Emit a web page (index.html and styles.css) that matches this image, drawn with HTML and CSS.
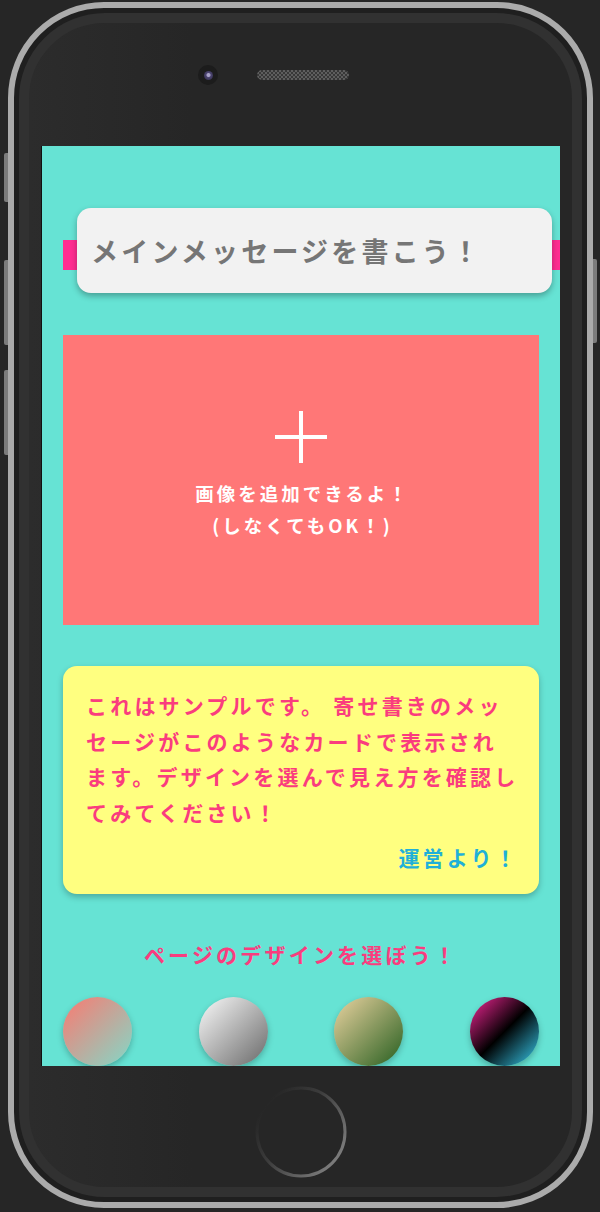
FILE: index.html
```html
<!DOCTYPE html>
<html lang="ja">
<head>
<meta charset="utf-8">
<title>寄せ書き</title>
<link rel="stylesheet" href="styles.css">
</head>
<body>
<div class="device">
  <div class="keys keys-left">
    <span class="key key-mute"></span>
    <span class="key key-vol"></span>
    <span class="key key-vol"></span>
  </div>
  <div class="phone">
    <div class="face">
      <div class="sensors">
        <span class="camera"><span class="lens"></span></span>
        <span class="speaker"></span>
      </div>
      <div class="screen">
        <div class="title-row">
          <div class="title-card">メインメッセージを書こう！</div>
        </div>
        <div class="image-drop">
          <svg class="plus" width="52" height="52" viewBox="0 0 52 52"><path d="M26 0V52M0 26H52" stroke="#fff" stroke-width="4" fill="none"/></svg>
          <p class="drop-text">画像を追加できるよ！<br>(しなくてもOK！)</p>
        </div>
        <div class="message-card">
          <p class="message-text">これはサンプルです。 寄せ書きのメッ<br>セージがこのようなカードで表示され<br>ます。デザインを選んで見え方を確認し<br>てみてください！</p>
          <p class="message-from">運営より！</p>
        </div>
        <p class="design-heading">ページのデザインを選ぼう！</p>
        <div class="swatches">
          <span class="swatch swatch-1"></span>
          <span class="swatch swatch-2"></span>
          <span class="swatch swatch-3"></span>
          <span class="swatch swatch-4"></span>
        </div>
      </div>
      <div class="chin">
        <svg class="home" width="92" height="92" viewBox="0 0 92 92">
          <defs>
            <linearGradient id="hg" x1="0.1" y1="0.2" x2="0.9" y2="0.8">
              <stop offset="0" stop-color="#262626"/>
              <stop offset="0.4" stop-color="#3c3c3c"/>
              <stop offset="1" stop-color="#7a7a7a"/>
            </linearGradient>
          </defs>
          <circle cx="46" cy="46" r="44" fill="none" stroke="url(#hg)" stroke-width="3"/>
        </svg>
      </div>
    </div>
  </div>
  <div class="keys keys-right">
    <span class="key key-power"></span>
  </div>
</div>
</body>
</html>
```
FILE: styles.css
```css
html, body {
  margin: 0;
  padding: 0;
  background: #262626;
}
body {
  width: 600px;
  height: 1212px;
  overflow: hidden;
  font-family: "Noto Sans CJK JP", "Noto Sans", sans-serif;
}
.device {
  display: flex;
  padding: 2px 0 0 4px;
}
.keys {
  width: 4px;
  display: flex;
  flex-direction: column;
}
.keys-left {
  padding-top: 151px;
}
.keys-right {
  padding-top: 257px;
}
.key {
  display: block;
  width: 4px;
  background: #7c7c7c;
}
.keys-left .key {
  border-radius: 2px 0 0 2px;
}
.keys-right .key {
  border-radius: 0 2px 2px 0;
}
.key-mute {
  height: 49px;
}
.key-vol {
  height: 85px;
  margin-top: 58px;
}
.key-vol + .key-vol {
  margin-top: 25px;
}
.key-power {
  height: 84px;
}
.phone {
  width: 585px;
  height: 1206px;
  box-sizing: border-box;
  border: 6px solid #ababab;
  border-radius: 96px;
  background: #1f1f1f;
  padding: 5px;
}
.face {
  height: 100%;
  box-sizing: border-box;
  border: 10px solid #313131;
  border-radius: 86px;
  background: linear-gradient(90deg, #2c2c2c 0%, #262626 30%, #262626 100%);
  padding: 0 12px 0 13px;
  display: flex;
  flex-direction: column;
}
.sensors {
  height: 104px;
  display: flex;
  align-items: center;
  padding-left: 156px;
}
.camera {
  width: 20px;
  height: 20px;
  border-radius: 50%;
  background: #1c1c1c;
  display: flex;
  align-items: center;
  justify-content: center;
}
.lens {
  width: 9px;
  height: 9px;
  border-radius: 50%;
  background: radial-gradient(circle at 50% 45%, #a9a3c8 0 1.5px, #4b4470 2.5px, #2e2a45 100%);
}
.speaker {
  width: 92px;
  height: 10px;
  margin-left: 39px;
  border-radius: 5px;
  background: repeating-conic-gradient(#5e5e5e 0 25%, #383838 0 50%) 0 0 / 4px 4px;
}
.screen {
  margin-top: 19px;
  width: 518px;
  height: 920px;
  flex: none;
  box-sizing: border-box;
  overflow: hidden;
  background: #66e3d4;
  box-shadow: -1px 0 0 #111;
  padding: 62px 21px 0;
}
.title-row {
  margin-right: -21px;
  padding: 0 8px 0 14px;
  background: linear-gradient(#ff2d91, #ff2d91) 0 32px / 100% 30px no-repeat;
}
.title-card {
  height: 85px;
  box-sizing: border-box;
  background: #f2f2f2;
  border-radius: 14px;
  box-shadow: 0 3px 6px rgba(0, 0, 0, 0.3);
  display: flex;
  align-items: center;
  padding-left: 14px;
  font-size: 27px;
  font-weight: 700;
  letter-spacing: 3.2px;
  color: #767676;
}
.image-drop {
  margin-top: 42px;
  height: 290px;
  box-sizing: border-box;
  background: #ff7777;
  display: flex;
  flex-direction: column;
  align-items: center;
  padding-top: 76px;
}
.plus {
  display: block;
}
.drop-text {
  margin: 14px 0 0;
  color: #fff;
  font-size: 18.5px;
  font-weight: 700;
  letter-spacing: 3px;
  line-height: 32px;
  text-align: center;
  padding-left: 3px;
}
.message-card {
  margin-top: 41px;
  background: #ffff80;
  border-radius: 14px;
  box-shadow: 0 3px 6px rgba(0, 0, 0, 0.25);
  padding: 22px 20px 18px 23px;
}
.message-text {
  margin: 0;
  color: #fa3c7e;
  font-size: 21px;
  font-weight: 700;
  letter-spacing: 3.2px;
  line-height: 35.5px;
  white-space: nowrap;
}
.message-from {
  margin: 10px 0 0;
  text-align: right;
  color: #1fb0d8;
  font-size: 21px;
  font-weight: 700;
  letter-spacing: 3.2px;
  line-height: 35.5px;
}
.design-heading {
  margin: 43px 0 0;
  text-align: center;
  color: #fa3c7e;
  font-size: 21px;
  font-weight: 700;
  letter-spacing: 3.2px;
  line-height: 35.5px;
}
.swatches {
  margin-top: 25px;
  display: flex;
  justify-content: space-between;
}
.swatch {
  width: 69px;
  height: 69px;
  border-radius: 50%;
  box-shadow: 0 3px 6px rgba(0, 0, 0, 0.25);
}
.swatch-1 {
  background: linear-gradient(135deg, #ef8379 10%, #8fcfbf 90%);
}
.swatch-2 {
  background: linear-gradient(135deg, #ececec 10%, #777777 90%);
}
.swatch-3 {
  background: linear-gradient(135deg, #d8c894 10%, #3a6a2c 90%);
}
.swatch-4 {
  background: linear-gradient(135deg, #d02080 8%, #000 50%, #32b8d8 95%);
}
.chin {
  flex: 1;
  display: flex;
  justify-content: center;
  padding-top: 20px;
}
.home {
  display: block;
}
```
